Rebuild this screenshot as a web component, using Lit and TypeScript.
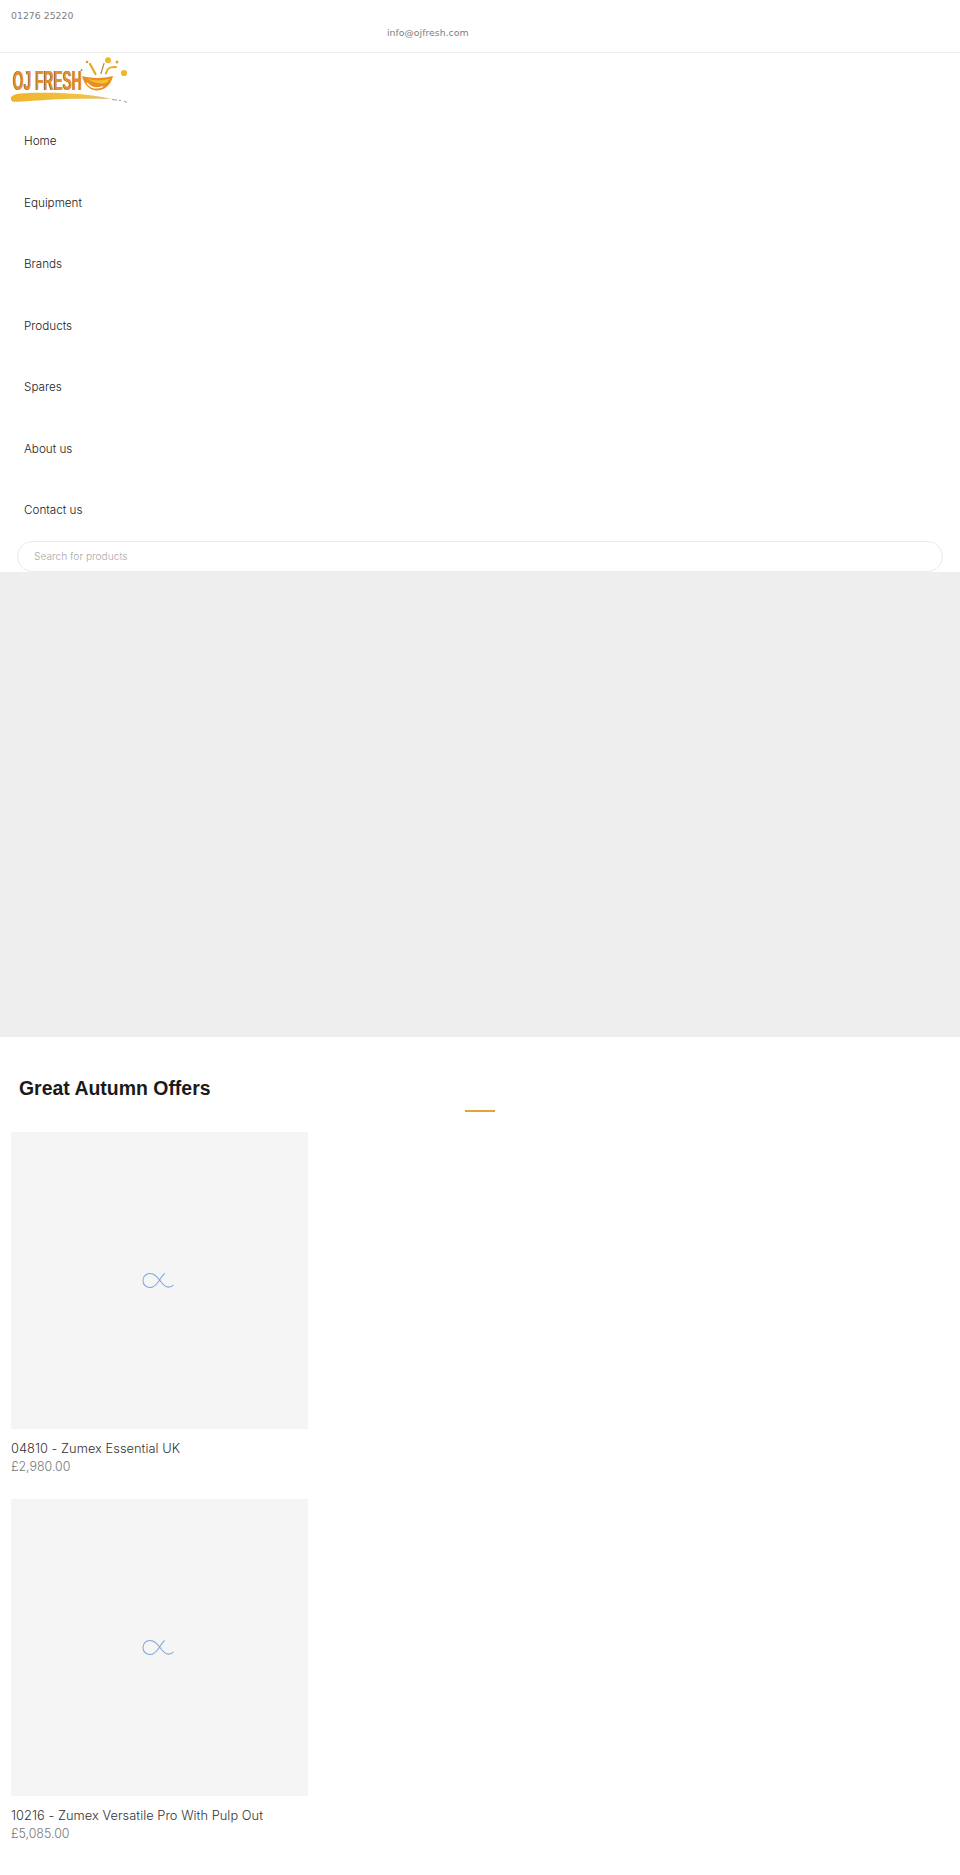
import { LitElement, html, css, svg } from "lit";
import { customElement } from "lit/decorators.js";

const NAV = ["Home", "Equipment", "Brands", "Products", "Spares", "About us", "Contact us"];
const PRODUCTS = [
  { name: "04810 - Zumex Essential UK", price: "£2,980.00" },
  { name: "10216 - Zumex Versatile Pro With Pulp Out", price: "£5,085.00" },
];

const logo = svg`<svg class="logo" viewBox="0 0 120 50" width="120" height="50" aria-label="OJ Fresh">
  <defs>
    <linearGradient id="sw" x1="0" x2="1"><stop offset="0" stop-color="#eeb52a"/><stop offset=".7" stop-color="#f0c043"/><stop offset="1" stop-color="#d9c48a"/></linearGradient>
  </defs>
  <text x="3.4" y="34.4" class="lg-s" textLength="69" lengthAdjust="spacingAndGlyphs">OJ FRESH</text>
  <text x="4" y="34" class="lg" textLength="69" lengthAdjust="spacingAndGlyphs">OJ FRESH</text>
  <path d="M2 41.5C4 37.5 10 37.5 26 36.8C52 36 84 38 102 43C88 43 72 42.5 50 43.2C30 44 10 46 4 45.7C2.4 45.4 1.6 43 2 41.5Z" fill="url(#sw)"/>
  <path d="M103 43.5l5 .6M110 44.4l2 .3M115 45.2l3 1.2" stroke="#8f8a76" stroke-width=".8" fill="none"/>
  <g transform="translate(2 -1)">
    <path d="M71 21C77 23 91 24 102 21C100 31 92 36 85 35.5C78 35 73 29 71 21Z" fill="#e98f23"/>
    <path d="M77 24C84 26 92 26 99 23.5C97 27 94 29 91 28.5C87 28 82 28 77 24Z" fill="#f4c22f"/>
    <path d="M76 28C80 33 86 34 92 31.5" stroke="#fff" stroke-width="1.3" fill="none"/>
    <path d="M79 9L84.5 19" stroke="#dfa92a" stroke-width="2.2" stroke-linecap="round"/>
    <path d="M90 18.5L93 8.5" stroke="#b98a35" stroke-width="1.2" stroke-linecap="round"/>
    <path d="M95 18.5C96 13 99 11.5 105 12" stroke="#e9ab28" stroke-width="2" fill="none" stroke-linecap="round"/>
  </g>
  <circle cx="99" cy="4.2" r="3" fill="#efb92e"/>
  <circle cx="108" cy="6" r="1.5" fill="#d7a92f"/>
  <circle cx="115" cy="17" r="3.1" fill="#eeb72c"/>
  <circle cx="78" cy="6" r="1.3" fill="#cf9f32"/>
  <circle cx="72.5" cy="14" r="1" fill="#8c8c8c"/>
</svg>`;

const placeholder = svg`<svg class="ph" viewBox="0 0 34 18" width="32" height="17" aria-hidden="true">
  <path d="M1 9C1 4.5 4.5 1.5 8.5 1.5C14 1.5 17 6 19.5 9.5C22 13 25.5 16.5 29 16C31 15.7 32.5 14.8 33.5 13.5M1 9C1 13.5 4.5 16.5 8.5 16.5C13 16.5 16 12.5 18 9.5C20 6.5 22 3.5 24 1.5" fill="none" stroke="#7fa6d4" stroke-width="1.1"/>
</svg>`;

@customElement("app-root")
export class AppRoot extends LitElement {
  static styles = css`
    :host { display: block; background: #fff; min-height: 1875px; font-family: Inter, sans-serif; }
    .topbar { height: 52px; border-bottom: 1px solid #eee; padding: 0 11px; box-sizing: content-box; font: 9.35px/17px "DejaVu Sans", sans-serif; color: #808080; display: flex; flex-direction: column; }
    .phone { margin-top: 7px; }
    .email { align-self: flex-start; margin-left: 376px; }
    .logo-wrap { height: 55px; padding: 3px 0 0 9px; box-sizing: content-box; }
    .logo { display: block; overflow: visible; }
    .lg { font: bold 27.8px "Liberation Sans Narrow", "Liberation Sans", sans-serif; fill: #e58f28; }
    .lg-s { font: bold 27.8px "Liberation Sans Narrow", "Liberation Sans", sans-serif; fill: #6b5a3a; }
    nav { display: flex; flex-direction: column; }
    nav a { height: 61.5px; line-height: 61.5px; padding-left: 24px; font-size: 11.7px; font-weight: 300; color: #222; text-decoration: none; }
    .search { margin: -1px 17px 0; height: 31px; border: 1px solid #eaeaea; border-radius: 16px; box-sizing: border-box; padding-left: 16px; line-height: 29px; font-size: 10.2px; font-weight: 300; color: #aaa; background: #fff; }
    .hero { height: 465px; background: #eee; }
    .head { position: relative; height: 95.5px; }
    h2 { margin: 0; padding: 36px 0 0 19px; font: bold 19.45px/30px "Liberation Sans", sans-serif; color: #1a1a1a; }
    .rule { position: absolute; left: 465px; top: 73px; width: 30px; height: 2px; background: #dfa53a; }
    .products { display: flex; flex-direction: column; padding-left: 11px; gap: 23px; }
    .card { width: 297px; }
    .thumb { height: 297px; background: #f5f5f5; display: flex; align-items: center; justify-content: center; }
    .ph { display: block; margin-left: -4px; }
    .name { margin-top: 10px; font-size: 12.8px; letter-spacing: .05px; font-weight: 300; line-height: 19px; color: #333; }
    .price { font-size: 12.4px; font-weight: 300; line-height: 18px; color: #777; }
  `;

  render() {
    return html`
      <div class="topbar">
        <div class="phone">01276 25220</div>
        <div class="email">info@ojfresh.com</div>
      </div>
      <div class="logo-wrap">${logo}</div>
      <nav>${NAV.map((n) => html`<a href="#">${n}</a>`)}</nav>
      <div class="search">Search for products</div>
      <div class="hero"></div>
      <div class="head">
        <h2>Great Autumn Offers</h2>
        <div class="rule"></div>
      </div>
      <div class="products">
        ${PRODUCTS.map((p) => html`
          <div class="card">
            <div class="thumb">${placeholder}</div>
            <div class="name">${p.name}</div>
            <div class="price">${p.price}</div>
          </div>`)}
      </div>
    `;
  }
}
